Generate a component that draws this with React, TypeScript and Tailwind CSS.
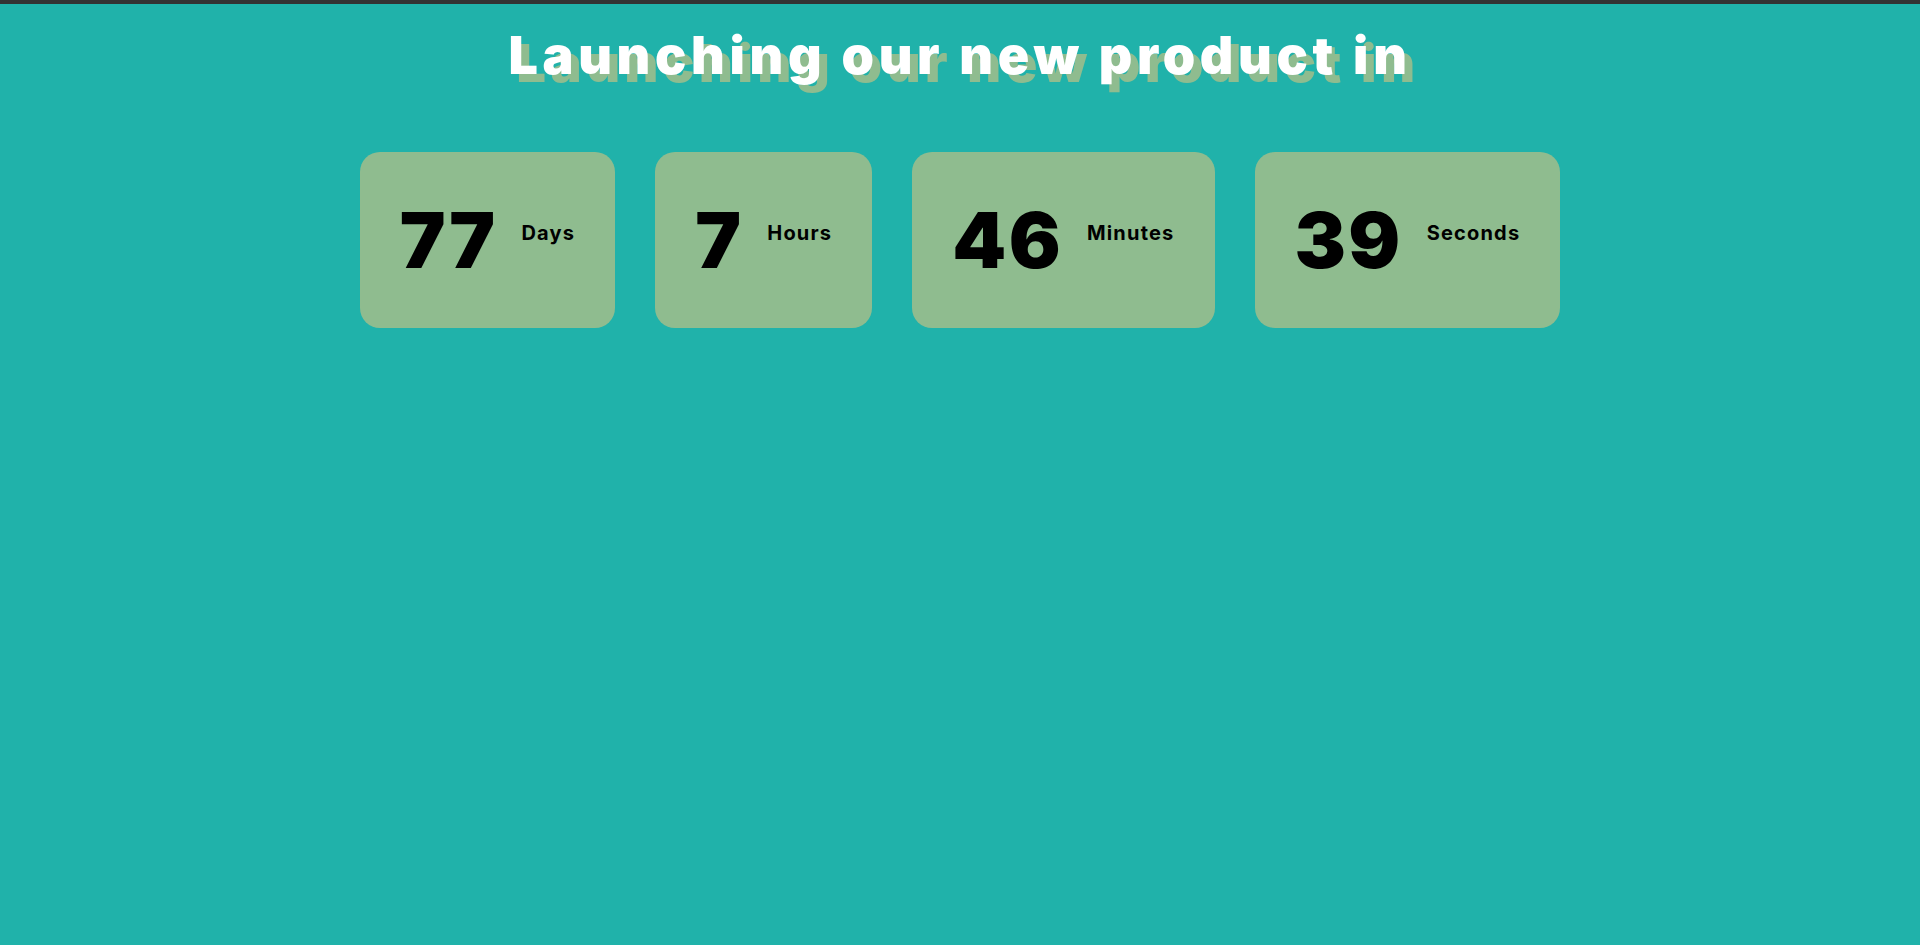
const units = [
  { value: 77, label: "Days" },
  { value: 7, label: "Hours" },
  { value: 46, label: "Minutes" },
  { value: 39, label: "Seconds" },
];

export default function App() {
  return (
    <div className="min-h-screen border-t-4 border-[#333333] bg-[#20b2aa] font-['Inter',sans-serif]">
      <h1 className="pt-[26px] text-center text-[52px] leading-none font-black tracking-[0.09em] text-white [text-shadow:8px_8px_0_#8fbc8f]">
        Launching our new product in
      </h1>
      <div className="mt-[70px] flex justify-center gap-10">
        {units.map((u) => (
          <div
            key={u.label}
            className="flex h-[176px] items-center gap-[24px] rounded-[20px] bg-[#8fbc8f] px-10"
          >
            <span className="text-[77px] leading-none font-black tracking-[0.03em] text-black">{u.value}</span>
            <span className="mb-[14px] text-[20px] leading-none font-bold tracking-[0.06em] text-black">{u.label}</span>
          </div>
        ))}
      </div>
    </div>
  );
}
